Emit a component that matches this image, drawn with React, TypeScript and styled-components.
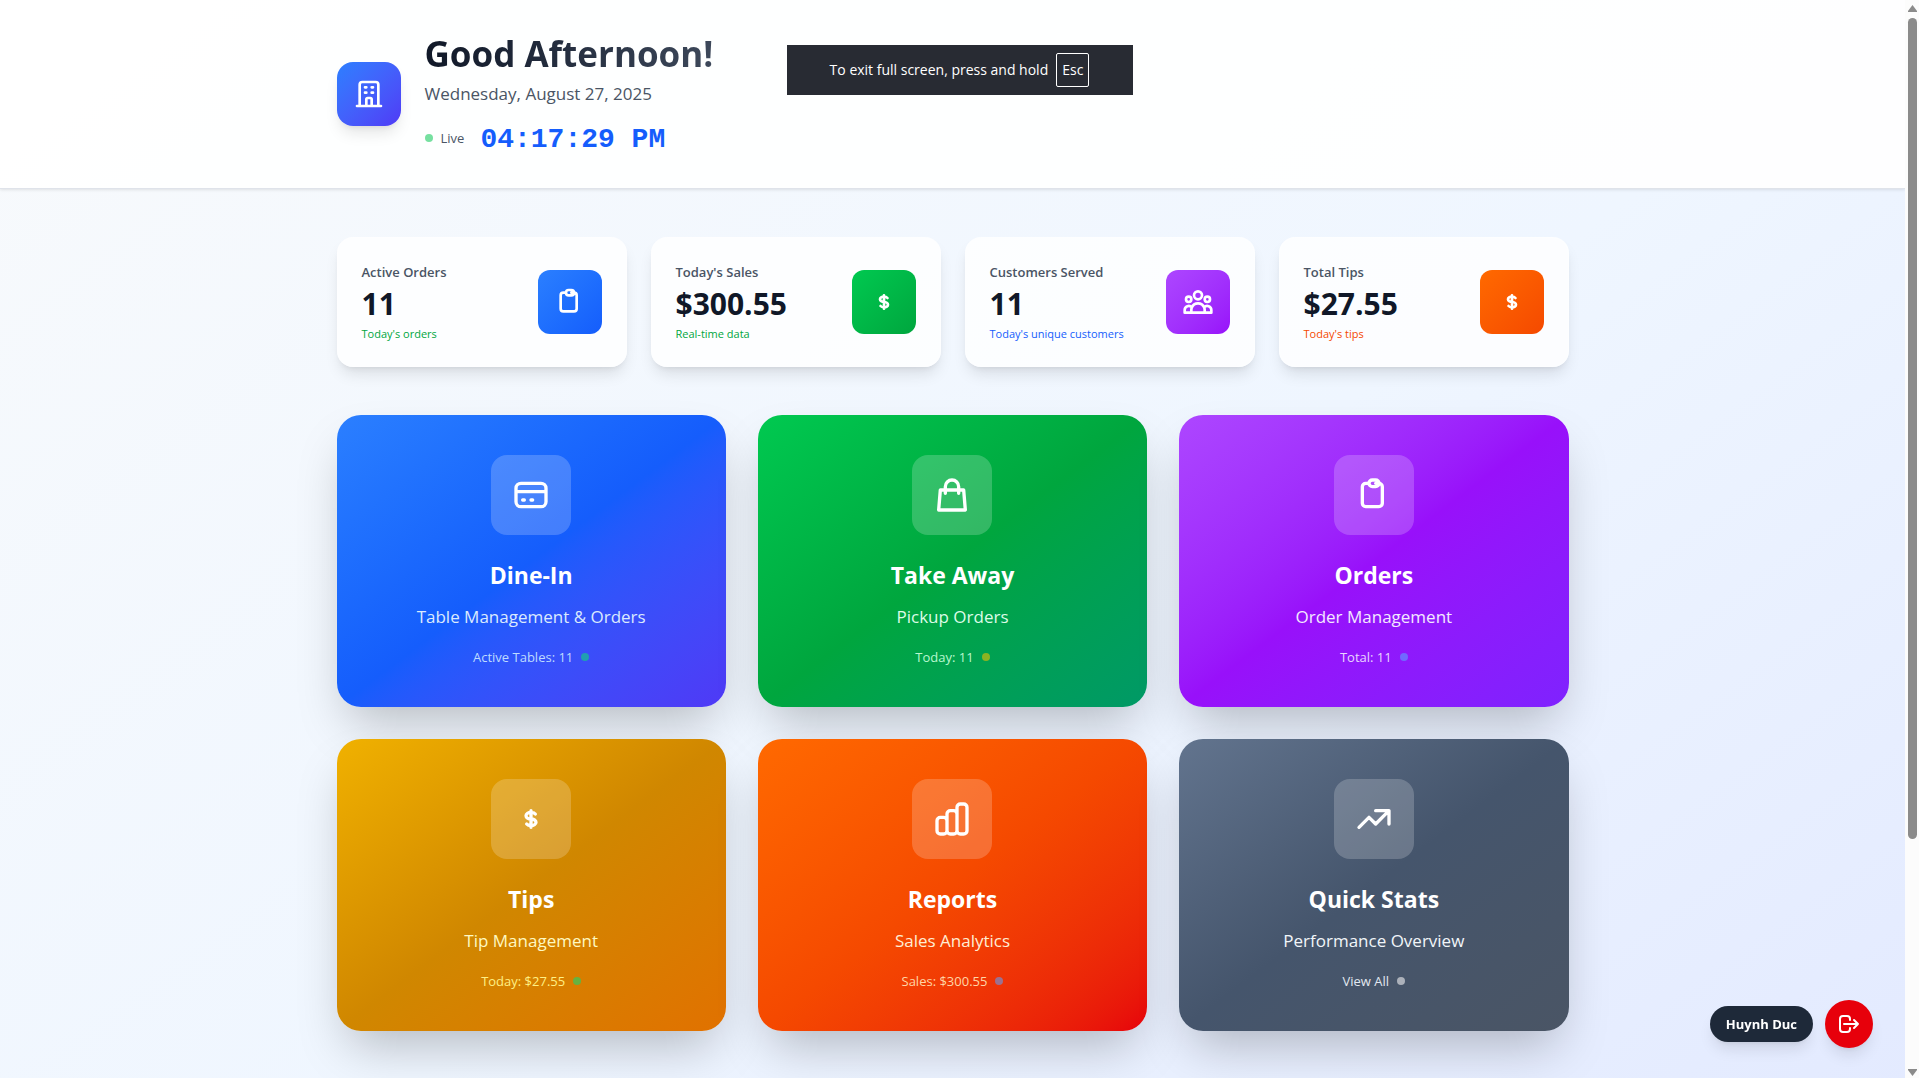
import React from "react";
import styled, { createGlobalStyle } from "styled-components";

const GlobalStyle = createGlobalStyle`
  *, *::before, *::after { box-sizing: border-box; }
  body {
    margin: 0;
    font-family: "Segoe UI", "Open Sans", "Noto Sans", sans-serif;
    color: #101828;
  }
  h1, h2, p { margin: 0; }
  button { font: inherit; border: 0; cursor: pointer; }
`;

const Shell = styled.div`
  display: flex;
  height: 100vh;
  overflow: hidden;
`;

const Viewport = styled.div`
  flex: 1;
  min-width: 0;
  overflow-y: auto;
  scrollbar-width: none;
`;

const Page = styled.div`
  min-height: 100%;
  background: linear-gradient(to bottom right in oklab, #f8fafc, #eff6ff, #e0e7ff);
`;

const Container = styled.div`
  max-width: 1280px;
  margin: 0 auto;
  padding: 0 24px;
`;

const Header = styled.header`
  padding: 32px 0;
  background: rgba(255, 255, 255, 0.9);
  border-bottom: 1px solid #dfe3ea;
  box-shadow: 0 1px 3px rgba(0, 0, 0, 0.1);
`;

const Brand = styled.div`
  display: flex;
  align-items: center;
  gap: 24px;
`;

const Tile = styled.div<{ $size: number; $radius: number; $fill: string; $raised?: boolean }>`
  display: flex;
  flex: none;
  align-items: center;
  justify-content: center;
  width: ${(p) => p.$size}px;
  height: ${(p) => p.$size}px;
  border-radius: ${(p) => p.$radius}px;
  background: ${(p) => p.$fill};
  color: #fff;
  box-shadow: ${(p) => (p.$raised ? "0 10px 15px -3px rgba(0,0,0,.1), 0 4px 6px -4px rgba(0,0,0,.1)" : "none")};
`;

const Greeting = styled.h1`
  font-size: 35px;
  line-height: 44px;
  font-weight: 700;
  color: transparent;
  background: linear-gradient(to right in oklab, #101828, #3d485a);
  background-clip: text;
  -webkit-background-clip: text;
`;

const DateLine = styled.p`
  margin-top: 4px;
  font-size: 17px;
  line-height: 28px;
  color: #4a5565;
`;

const ClockRow = styled.div`
  display: flex;
  align-items: center;
  gap: 16px;
  height: 36px;
  margin-top: 12px;
`;

const Live = styled.span`
  display: flex;
  align-items: center;
  gap: 8px;
  font-size: 13px;
  line-height: 20px;
  color: #4a5565;
`;

const Dot = styled.i<{ $color: string }>`
  width: 8px;
  height: 8px;
  border-radius: 50%;
  background: ${(p) => p.$color};
`;

const Clock = styled.time`
  padding-top: 4px;
  font-family: "Liberation Mono", monospace;
  font-size: 28px;
  line-height: 32px;
  font-weight: 700;
  color: #155dfc;
`;

const Main = styled.main`
  padding: 48px 0 346px;
`;

const StatGrid = styled.section`
  display: grid;
  grid-template-columns: repeat(4, 1fr);
  gap: 24px;
  margin-bottom: 48px;
`;

const StatCard = styled.article`
  display: flex;
  align-items: center;
  justify-content: space-between;
  padding: 24px;
  border: 1px solid rgba(255, 255, 255, 0.3);
  border-radius: 16px;
  background: rgba(255, 255, 255, 0.8);
  box-shadow: 0 10px 15px -3px rgba(0, 0, 0, 0.1), 0 4px 6px -4px rgba(0, 0, 0, 0.1);
`;

const StatLabel = styled.p`
  font-size: 13px;
  line-height: 20px;
  font-weight: 600;
  color: #4a5565;
`;

const StatValue = styled.p`
  margin: 4px 0;
  font-size: 30px;
  line-height: 36px;
  font-weight: 700;
`;

const StatNote = styled.p<{ $color: string }>`
  font-size: 11px;
  line-height: 16px;
  color: ${(p) => p.$color};
`;

const ModuleGrid = styled.section`
  display: grid;
  grid-template-columns: repeat(3, 1fr);
  gap: 32px;
`;

const ModuleCard = styled.button<{ $fill: string }>`
  display: flex;
  flex-direction: column;
  align-items: center;
  padding: 40px;
  border-radius: 24px;
  background: ${(p) => p.$fill};
  color: #fff;
  box-shadow: 0 25px 50px -12px rgba(0, 0, 0, 0.25);
`;

const ModuleTitle = styled.h2`
  margin-top: 24px;
  font-size: 23px;
  line-height: 32px;
  font-weight: 700;
`;

const ModuleText = styled.p<{ $color: string }>`
  margin-top: 12px;
  font-size: 17px;
  line-height: 28px;
  color: ${(p) => p.$color};
`;

const ModuleMeta = styled.span<{ $color: string }>`
  display: flex;
  align-items: center;
  gap: 8px;
  margin-top: 16px;
  font-size: 13px;
  line-height: 20px;
  color: ${(p) => p.$color};
`;

const FullscreenNotice = styled.div`
  position: fixed;
  top: 45px;
  left: 50%;
  transform: translateX(-50%);
  display: flex;
  align-items: center;
  justify-content: center;
  gap: 8px;
  width: 346px;
  height: 50px;
  background: #282b33;
  color: #fff;
  font-size: 14px;
  line-height: 20px;
`;

const Key = styled.kbd`
  padding: 6px 5px;
  border: 1px solid #fff;
  border-radius: 2px;
  font: inherit;
`;

const UserDock = styled.div`
  position: fixed;
  right: 46px;
  bottom: 30px;
  display: flex;
  align-items: center;
  gap: 12px;
`;

const UserName = styled.span`
  padding: 8px 16px;
  border-radius: 18px;
  background: #1e2939;
  color: #fff;
  font-size: 13px;
  line-height: 20px;
  font-weight: 700;
  box-shadow: 0 10px 15px -3px rgba(0, 0, 0, 0.1), 0 4px 6px -4px rgba(0, 0, 0, 0.1);
`;

const LogoutButton = styled.button`
  display: flex;
  align-items: center;
  justify-content: center;
  width: 48px;
  height: 48px;
  padding: 0;
  border-radius: 50%;
  background: #e7000b;
  color: #fff;
  box-shadow: 0 10px 15px -3px rgba(0, 0, 0, 0.1), 0 4px 6px -4px rgba(0, 0, 0, 0.1);
`;

const Rail = styled.div`
  display: flex;
  flex: none;
  flex-direction: column;
  align-items: center;
  gap: 6px;
  width: 14px;
  padding: 5px 0 2px;
  background: #fcfcfc;
`;

const Arrow = styled.svg`
  flex: none;
  width: 9px;
  height: 7px;
  fill: #8b8b8b;
`;

const Thumb = styled.div`
  flex: 79;
  width: 9px;
  border-radius: 5px;
  background: #8b8b8b;
`;

const Track = styled.div`
  flex: 21;
`;

const paths = {
  building:
    "M19 21V5a2 2 0 00-2-2H7a2 2 0 00-2 2v16m14 0h2m-2 0h-5m-9 0H3m2 0h5M9 7h1m-1 4h1m4-4h1m-1 4h1m-5 10v-5a1 1 0 011-1h2a1 1 0 011 1v5m-4 0h4",
  clipboard:
    "M9 5H7a2 2 0 00-2 2v10a2 2 0 002 2h8a2 2 0 002-2V7a2 2 0 00-2-2h-2M9 5a2 2 0 002 2h2a2 2 0 002-2M9 5a2 2 0 012-2h2a2 2 0 012 2",
  dollar:
    "M12 8c-1.657 0-3 .895-3 2s1.343 2 3 2 3 .895 3 2-1.343 2-3 2m0-8c1.11 0 2.08.402 2.599 1M12 8V7m0 1v8m0 0v1m0-1c-1.11 0-2.08-.402-2.599-1",
  users:
    "M17 20h5v-2a3 3 0 00-5.356-1.857M17 20H7m10 0v-2c0-.656-.126-1.283-.356-1.857M7 20H2v-2a3 3 0 015.356-1.857M7 20v-2c0-.656.126-1.283.356-1.857m0 0a5.002 5.002 0 019.288 0M15 7a3 3 0 11-6 0 3 3 0 016 0zm6 3a2 2 0 11-4 0 2 2 0 014 0zM7 10a2 2 0 11-4 0 2 2 0 014 0z",
  card: "M3 10h18M7 15h1m4 0h1m-7 4h12a3 3 0 003-3V8a3 3 0 00-3-3H6a3 3 0 00-3 3v8a3 3 0 003 3z",
  bag: "M16 11V7a4 4 0 00-8 0v4M5 9h14l1 12H4L5 9z",
  bars: "M9 19v-6a2 2 0 00-2-2H5a2 2 0 00-2 2v6a2 2 0 002 2h2a2 2 0 002-2zm0 0V9a2 2 0 012-2h2a2 2 0 012 2v10m-6 0a2 2 0 002 2h2a2 2 0 002-2m0 0V5a2 2 0 012-2h2a2 2 0 012 2v14a2 2 0 01-2 2h-2a2 2 0 01-2-2z",
  trend: "M13 7h8m0 0v8m0-8l-8 8-4-4-6 6",
  logout:
    "M17 16l4-4m0 0l-4-4m4 4H7m6 4v1a3 3 0 01-3 3H6a3 3 0 01-3-3V7a3 3 0 013-3h4a3 3 0 013 3v1",
};

type IconName = keyof typeof paths;

function Icon({ name, size }: { name: IconName; size: number }) {
  return (
    <svg
      width={size}
      height={size}
      viewBox="0 0 24 24"
      fill="none"
      stroke="currentColor"
      strokeWidth={2}
      strokeLinecap="round"
      strokeLinejoin="round"
      aria-hidden="true"
    >
      <path d={paths[name]} />
    </svg>
  );
}

const diagonal = (stops: string) => `linear-gradient(to bottom right in oklab, ${stops})`;

const stats: { label: string; value: string; note: string; color: string; fill: string; icon: IconName }[] = [
  { label: "Active Orders", value: "11", note: "Today's orders", color: "#00a63e", fill: "#2b7fff, #155dfc", icon: "clipboard" },
  { label: "Today's Sales", value: "$300.55", note: "Real-time data", color: "#00a63e", fill: "#00c950, #00a63e", icon: "dollar" },
  { label: "Customers Served", value: "11", note: "Today's unique customers", color: "#155dfc", fill: "#ad46ff, #9810fa", icon: "users" },
  { label: "Total Tips", value: "$27.55", note: "Today's tips", color: "#f54900", fill: "#ff6900, #f54900", icon: "dollar" },
];

const modules: {
  title: string;
  text: string;
  meta: string;
  fill: string;
  textColor: string;
  metaColor: string;
  dot: string;
  icon: IconName;
}[] = [
  { title: "Dine-In", text: "Table Management & Orders", meta: "Active Tables: 11", fill: "#2b7fff, #155dfc, #4f39f6", textColor: "#dbeafe", metaColor: "#bedbff", dot: "#209fb0", icon: "card" },
  { title: "Take Away", text: "Pickup Orders", meta: "Today: 11", fill: "#00c950, #00a63e, #009966", textColor: "#dcfce7", metaColor: "#b9f8cf", dot: "#8cb322", icon: "bag" },
  { title: "Orders", text: "Order Management", meta: "Total: 11", fill: "#ad46ff, #9810fa, #7f22fe", textColor: "#f3e8ff", metaColor: "#e9d4ff", dot: "#7069ff", icon: "clipboard" },
  { title: "Tips", text: "Tip Management", meta: "Today: $27.55", fill: "#f0b100, #d08700, #e17100", textColor: "#fef9c2", metaColor: "#fff085", dot: "#66b240", icon: "dollar" },
  { title: "Reports", text: "Sales Analytics", meta: "Sales: $300.55", fill: "#ff6900, #f54900, #e7000b", textColor: "#ffedd4", metaColor: "#ffd6a7", dot: "#9b7190", icon: "bars" },
  { title: "Quick Stats", text: "Performance Overview", meta: "View All", fill: "#62748e, #45556c, #4a5565", textColor: "#f1f5f9", metaColor: "#e2e8f0", dot: "#acb1ba", icon: "trend" },
];

export default function App() {
  return (
    <>
      <GlobalStyle />
      <Shell>
        <Viewport>
          <Page>
            <Header>
              <Container>
                <Brand>
                  <Tile $size={64} $radius={16} $fill={diagonal("#2b7fff, #4f39f6")} $raised>
                    <Icon name="building" size={32} />
                  </Tile>
                  <div>
                    <Greeting>Good Afternoon!</Greeting>
                    <DateLine>Wednesday, August 27, 2025</DateLine>
                    <ClockRow>
                      <Live>
                        <Dot $color="#76e0a0" />
                        Live
                      </Live>
                      <Clock>04:17:29 PM</Clock>
                    </ClockRow>
                  </div>
                </Brand>
              </Container>
            </Header>
            <Main>
              <Container>
                <StatGrid>
                  {stats.map((s) => (
                    <StatCard key={s.label}>
                      <div>
                        <StatLabel>{s.label}</StatLabel>
                        <StatValue>{s.value}</StatValue>
                        <StatNote $color={s.color}>{s.note}</StatNote>
                      </div>
                      <Tile $size={64} $radius={12} $fill={diagonal(s.fill)}>
                        <Icon name={s.icon} size={32} />
                      </Tile>
                    </StatCard>
                  ))}
                </StatGrid>
                <ModuleGrid>
                  {modules.map((m) => (
                    <ModuleCard key={m.title} type="button" $fill={diagonal(m.fill)}>
                      <Tile $size={80} $radius={16} $fill="rgba(255, 255, 255, 0.2)">
                        <Icon name={m.icon} size={40} />
                      </Tile>
                      <ModuleTitle>{m.title}</ModuleTitle>
                      <ModuleText $color={m.textColor}>{m.text}</ModuleText>
                      <ModuleMeta $color={m.metaColor}>
                        {m.meta}
                        <Dot $color={m.dot} />
                      </ModuleMeta>
                    </ModuleCard>
                  ))}
                </ModuleGrid>
              </Container>
            </Main>
          </Page>
        </Viewport>
        <Rail aria-hidden="true">
          <Arrow viewBox="0 0 9 7">
            <path d="M4.5 0L9 6V7H0V6z" />
          </Arrow>
          <Thumb />
          <Track />
          <Arrow viewBox="0 0 9 7">
            <path d="M4.5 7L9 1V0H0V1z" />
          </Arrow>
        </Rail>
      </Shell>
      <FullscreenNotice role="status">
        To exit full screen, press and hold <Key>Esc</Key>
      </FullscreenNotice>
      <UserDock>
        <UserName>Huynh Duc</UserName>
        <LogoutButton type="button" aria-label="Log out">
          <Icon name="logout" size={24} />
        </LogoutButton>
      </UserDock>
    </>
  );
}
